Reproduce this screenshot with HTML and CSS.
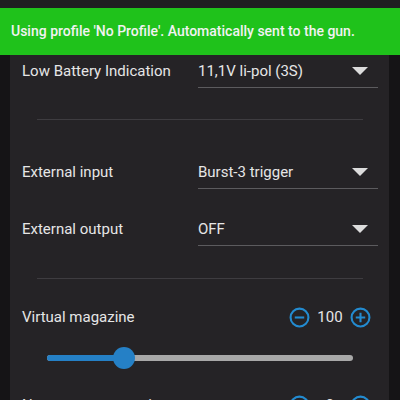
FILE: index.html
```html
<!DOCTYPE html>
<html lang="en">
<head>
    <meta charset="UTF-8">
    <meta name="viewport" content="width=device-width, initial-scale=1.0">
    <title>Gun Settings</title>
    <link rel="stylesheet" href="styles.css">
</head>
<body>
    <div class="topbar"></div>
    <div class="toast">Using profile 'No Profile'. Automatically sent to the gun.</div>
    <div class="card">
        <div class="row">
            <span class="label">Low Battery Indication</span>
            <div class="select"><span>11,1V li-pol (3S)</span><span class="arrow"></span></div>
        </div>
        <hr class="sep">
        <div class="row row-first">
            <span class="label">External input</span>
            <div class="select"><span>Burst-3 trigger</span><span class="arrow"></span></div>
        </div>
        <div class="row">
            <span class="label">External output</span>
            <div class="select"><span>OFF</span><span class="arrow"></span></div>
        </div>
        <hr class="sep sep-second">
        <div class="row stepper-row">
            <span class="label">Virtual magazine</span>
            <div class="stepper">
                <svg class="step-btn" viewBox="0 0 20 20"><circle cx="10" cy="10" r="8.5"/><path d="M5.5 10h9"/></svg>
                <span class="value">100</span>
                <svg class="step-btn" viewBox="0 0 20 20"><circle cx="10" cy="10" r="8.5"/><path d="M5.5 10h9M10 5.5v9"/></svg>
            </div>
        </div>
        <div class="slider">
            <div class="track"><div class="fill" style="width: 25%"></div></div>
            <div class="thumb" style="left: 25%"></div>
        </div>
        <div class="row stepper-row next-row">
            <span class="label">Near empty magazine</span>
            <div class="stepper">
                <svg class="step-btn" viewBox="0 0 20 20"><circle cx="10" cy="10" r="8.5"/><path d="M5.5 10h9"/></svg>
                <span class="value">0</span>
                <svg class="step-btn" viewBox="0 0 20 20"><circle cx="10" cy="10" r="8.5"/><path d="M5.5 10h9M10 5.5v9"/></svg>
            </div>
        </div>
    </div>
</body>
</html>
```

FILE: styles.css
```css
body {
    margin: 0;
    background-color: #151416;
    font-family: Roboto, "Liberation Sans", sans-serif;
    color: #e6e6e6;
    height: 400px;
    overflow: hidden;
}
.topbar {
    height: 8px;
    background: #1f1e21;
}
.toast {
    background: #1fc21b;
    color: #f2f2f2;
    font-weight: 500;
    font-size: 14px;
    height: 47px;
    line-height: 47px;
    padding-left: 11px;
    white-space: nowrap;
}
.card {
    background: #252326;
    margin: 0 11px 0 10px;
    padding: 0 11px 0 12px;
    height: 400px;
}
.row {
    display: flex;
    align-items: center;
    height: 32px;
    font-size: 15px;
}
.label {
    flex: 0 0 176px;
}
.select {
    flex: 1;
    display: flex;
    justify-content: space-between;
    align-items: center;
    height: 32px;
    border-bottom: 1px solid #5c5b5e;
}
.select span:first-child {
    padding-top: 1px;
}
.arrow {
    width: 0;
    height: 0;
    border-left: 8px solid transparent;
    border-right: 8px solid transparent;
    border-top: 8px solid #dcdcdc;
    margin-right: 10px;
}
.sep {
    border: none;
    border-top: 1px solid #3e3c40;
    margin: 32px 15px 36px 15px;
}
.sep-second {
    margin-top: 33px;
    margin-bottom: 22px;
}
.row-first {
    margin-bottom: 25px;
}
.stepper-row {
    justify-content: space-between;
}
.next-row {
    margin-top: 20px;
}
.stepper {
    display: flex;
    align-items: center;
    gap: 6px;
    margin-right: 7px;
}
.step-btn {
    width: 21px;
    height: 21px;
    fill: none;
    stroke: #238bd0;
    stroke-width: 2;
}
.value {
    font-size: 15px;
    min-width: 28px;
    text-align: center;
}
.slider {
    position: relative;
    margin: 14px 25px 0 25px;
    height: 22px;
}
.track {
    position: absolute;
    top: 8px;
    left: 0;
    right: 0;
    height: 6px;
    border-radius: 3px;
    background: #a8a8a8;
    overflow: hidden;
}
.fill {
    height: 100%;
    background: #2580c6;
}
.thumb {
    position: absolute;
    top: 0;
    width: 22px;
    height: 22px;
    margin-left: -11px;
    border-radius: 50%;
    background: #2580c6;
}
```
